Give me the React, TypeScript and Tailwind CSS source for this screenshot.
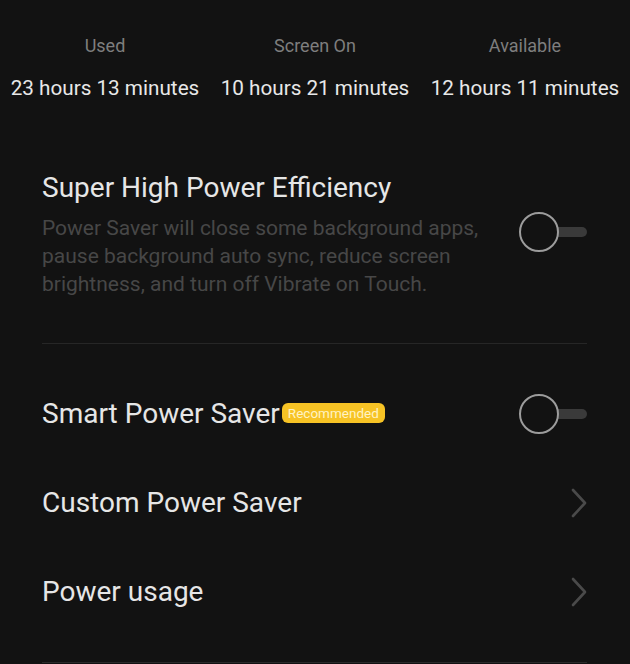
import React from "react";

function Toggle() {
  return (
    <div className="relative w-[68px] h-[40px] shrink-0">
      <div className="absolute right-0 top-[15px] w-[36px] h-[10px] rounded-full bg-[#3a3a3a]" />
      <div className="absolute left-0 top-0 w-[40px] h-[40px] rounded-full border-2 border-[#9c9c9c] bg-[#121212]" />
    </div>
  );
}

function Chevron() {
  return (
    <svg width="16" height="30" viewBox="0 0 16 30" className="shrink-0">
      <polyline points="2,2 14,15 2,28" fill="none" stroke="#4a4a4a" strokeWidth="2.6" strokeLinecap="round" strokeLinejoin="round" />
    </svg>
  );
}

export default function App() {
  const stats = [
    ["Used", "23 hours 13 minutes"],
    ["Screen On", "10 hours 21 minutes"],
    ["Available", "12 hours 11 minutes"],
  ];
  return (
    <div className="w-[630px] h-[664px] overflow-hidden bg-[#121212]" style={{ fontFamily: "Roboto, 'Liberation Sans', sans-serif" }}>
      <div className="grid grid-cols-3 pt-[34px]">
        {stats.map(([l, v]) => (
          <div key={l} className="flex flex-col items-center">
            <div className="text-[18px] leading-[24px] text-[#7e7e7e]">{l}</div>
            <div className="mt-[16px] text-[20.7px] leading-[28px] text-[#e8e8e8] whitespace-nowrap">{v}</div>
          </div>
        ))}
      </div>

      <div className="px-[42px] pr-[43px]">
        <div className="mt-[70px] flex items-center justify-between">
          <div>
            <div className="text-[28px] leading-[32px] text-[#e6e6e6]">Super High Power Efficiency</div>
            <div className="mt-[10px] text-[21px] leading-[28px] text-[#474747] w-[450px]">
              Power Saver will close some background apps, pause background auto sync, reduce screen brightness, and turn off Vibrate on Touch.
            </div>
          </div>
          <div className="mb-[6px]">
            <Toggle />
          </div>
        </div>
        <div className="mt-[45px] h-px bg-[#262626]" />

        <div className="pt-[25px]">
          <div className="h-[89px] flex items-center justify-between">
            <div className="flex items-center">
              <span className="text-[28px] leading-[32px] text-[#e6e6e6]">Smart Power Saver</span>
              <span className="ml-[2px] mt-[-2px] h-[20px] px-[6px] rounded-[6px] bg-[#f7c325] text-[13.5px] leading-[20px] text-[#fff3c4]">Recommended</span>
            </div>
            <Toggle />
          </div>
          <div className="h-[89px] flex items-center justify-between">
            <span className="text-[28px] leading-[32px] text-[#e6e6e6]">Custom Power Saver</span>
            <Chevron />
          </div>
          <div className="h-[89px] flex items-center justify-between">
            <span className="text-[28px] leading-[32px] text-[#e6e6e6]">Power usage</span>
            <Chevron />
          </div>
        </div>
        <div className="mt-[26px] h-px bg-[#2a2a2a]" />
      </div>
    </div>
  );
}
